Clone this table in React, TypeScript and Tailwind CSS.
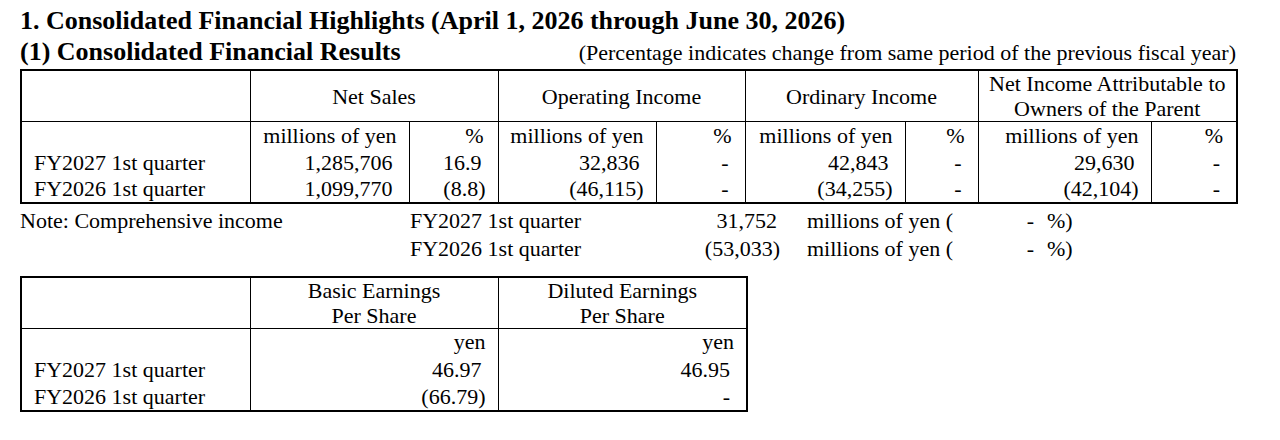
const results = [
  {
    label: "FY2027 1st quarter",
    values: ["1,285,706", "16.9", "32,836", "-", "42,843", "-", "29,630", "-"],
  },
  {
    label: "FY2026 1st quarter",
    values: ["1,099,770", "(8.8)", "(46,115)", "-", "(34,255)", "-", "(42,104)", "-"],
  },
]

const eps = [
  { label: "FY2027 1st quarter", values: ["46.97", "46.95"] },
  { label: "FY2026 1st quarter", values: ["(66.79)", "-"] },
]

const comprehensive = [
  { note: "Note: Comprehensive income", label: "FY2027 1st quarter", value: "31,752" },
  { note: "", label: "FY2026 1st quarter", value: "(53,033)" },
]

// positive figures keep room for a closing paren, like "#,##0_);(#,##0)"
function NumCell({ v }: { v: string }) {
  const pad = v.startsWith("(") ? "pr-[12px]" : "pr-[16px]"
  return <td className={`border-x border-black text-right align-middle ${pad}`}>{v}</td>
}

export default function App() {
  return (
    <div className="min-h-[440px] w-[1280px] bg-white pl-[20px] pt-[5px] font-['Liberation_Serif','Times_New_Roman',serif] text-[22px] text-black">
      <div className="w-[1216px]">
        <h1 className="text-[26px] font-bold leading-[31px]">
          1. Consolidated Financial Highlights (April 1, 2026 through June 30, 2026)
        </h1>
        <div className="flex items-baseline justify-between leading-[31px]">
          <h2 className="text-[26px] font-bold">(1) Consolidated Financial Results</h2>
          <span>(Percentage indicates change from same period of the previous fiscal year)</span>
        </div>

        <table className="mt-[1px] w-[1216px] table-fixed border-collapse border-2 border-black leading-[25px]">
          <colgroup>
            <col className="w-[229px]" />
            <col className="w-[159px]" />
            <col className="w-[89px]" />
            <col className="w-[158px]" />
            <col className="w-[89px]" />
            <col className="w-[160px]" />
            <col className="w-[73px]" />
            <col className="w-[173px]" />
            <col className="w-[86px]" />
          </colgroup>
          <thead>
            <tr className="h-[47px]">
              <th className="border border-black font-normal" />
              <th colSpan={2} className="border border-black text-center font-normal">Net Sales</th>
              <th colSpan={2} className="border border-black text-center font-normal">Operating Income</th>
              <th colSpan={2} className="border border-black text-center font-normal">Ordinary Income</th>
              <th colSpan={2} className="border border-black text-center font-normal">
                Net Income Attributable to
                <br />
                Owners of the Parent
              </th>
            </tr>
          </thead>
          <tbody>
            <tr className="h-[27px]">
              <td className="border-x border-black" />
              <td className="border-x border-black pr-[12px] text-right">millions of yen</td>
              <td className="border-x border-black pr-[14px] text-right">%</td>
              <td className="border-x border-black pr-[12px] text-right">millions of yen</td>
              <td className="border-x border-black pr-[13px] text-right">%</td>
              <td className="border-x border-black pr-[12px] text-right">millions of yen</td>
              <td className="border-x border-black pr-[13px] text-right">%</td>
              <td className="border-x border-black pr-[12px] text-right">millions of yen</td>
              <td className="border-x border-black pr-[13px] text-right">%</td>
            </tr>
            {results.map((r) => (
              <tr key={r.label} className="h-[27px]">
                <td className="border-x border-black pl-[12px]">{r.label}</td>
                {r.values.map((v, i) => (
                  <NumCell key={i} v={v} />
                ))}
              </tr>
            ))}
          </tbody>
        </table>

        <div className="mt-[3px]">
          {comprehensive.map((c) => (
            <div key={c.label} className="flex h-[28px] items-center">
              <span className="w-[390px]">{c.note}</span>
              <span className="w-[290px]">{c.label}</span>
              <span className={`w-[80px] text-right ${c.value.startsWith("(") ? "" : "pr-[3px]"}`}>{c.value}</span>
              <span className="ml-[27px] w-[200px]">millions of yen (</span>
              <span className="w-[27px] text-right">-</span>
              <span className="ml-[13px]">%)</span>
            </div>
          ))}
        </div>

        <table className="mt-[13px] w-[726px] table-fixed border-collapse border-2 border-black leading-[25px]">
          <colgroup>
            <col className="w-[229px]" />
            <col className="w-[248px]" />
            <col className="w-[249px]" />
          </colgroup>
          <thead>
            <tr className="h-[48px]">
              <th className="border border-black font-normal" />
              <th className="border border-black text-center font-normal">
                Basic Earnings
                <br />
                Per Share
              </th>
              <th className="border border-black text-center font-normal">
                Diluted Earnings
                <br />
                Per Share
              </th>
            </tr>
          </thead>
          <tbody>
            <tr className="h-[27px]">
              <td className="border-x border-black" />
              <td className="border-x border-black pr-[12px] text-right">yen</td>
              <td className="border-x border-black pr-[12px] text-right">yen</td>
            </tr>
            {eps.map((r) => (
              <tr key={r.label} className="h-[28px]">
                <td className="border-x border-black pl-[12px]">{r.label}</td>
                {r.values.map((v, i) => (
                  <NumCell key={i} v={v} />
                ))}
              </tr>
            ))}
          </tbody>
        </table>
      </div>
    </div>
  )
}
